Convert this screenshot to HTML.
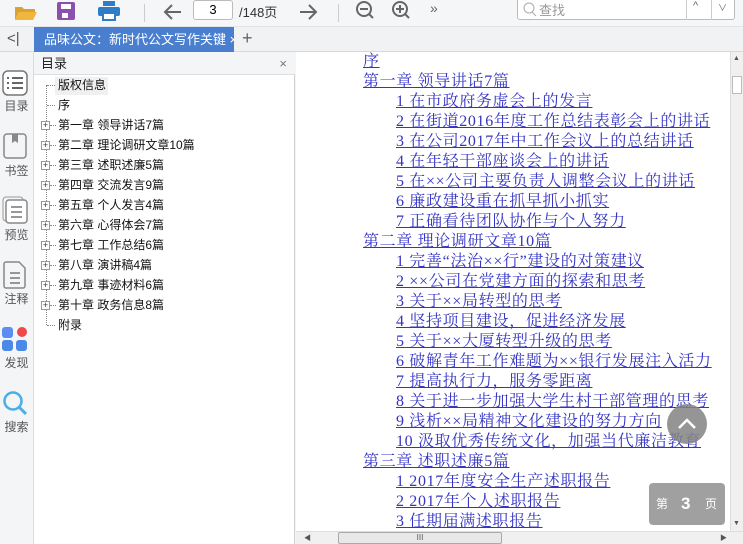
<!DOCTYPE html>
<html><head><meta charset="utf-8"><style>
*{margin:0;padding:0;box-sizing:border-box}
body{width:743px;height:544px;overflow:hidden;background:#f4f5f7;font-family:"Liberation Sans","Noto Sans CJK SC",sans-serif;position:relative}
.abs{position:absolute}
#tb{left:0;top:0;width:743px;height:27px;background:#f4f6f8;border-bottom:1px solid #e2e4e6}
#tabs{left:0;top:27px;width:743px;height:25px;background:#f1f2f4;border-bottom:1px solid #d8d8d8}
#tab{left:34px;top:27px;width:200px;height:25px;background:#4a7fd0;color:#fff;font-size:13px;line-height:25px;padding-left:10px;white-space:nowrap;overflow:hidden}
#side{left:0;top:52px;width:34px;height:492px;background:#f4f5f7;border-right:1px solid #dcdcdc}
.si{position:absolute;left:0;width:33px;text-align:center;font-size:12px;color:#555}
#toc{left:34px;top:52px;width:261px;height:492px;background:#fff;border-right:1px solid #d0d0d0}
#toch{left:34px;top:52px;width:261px;height:23px;background:#f4f5f7;border-bottom:1px solid #ddd;font-size:13px;line-height:23px;padding-left:7px;color:#222}
.t{position:absolute;left:58px;font-size:12px;color:#111;line-height:16px}
.pl{position:absolute;left:41px;width:9px;height:9px;border:1px solid #8a9ab0;background:#fff;font-size:9px;line-height:7px;text-align:center;color:#334}
.dl{position:absolute;border-top:1px dotted #888;width:8px}
#doc{left:296px;top:52px;width:434px;height:479px;background:#fff}
.d{position:absolute;font-family:"Liberation Serif","Noto Serif CJK SC",serif;font-size:16px;line-height:20px;letter-spacing:0.65px;color:#3535c4;text-decoration:underline;white-space:nowrap;margin-top:2px}
</style></head><body>
<div id="tb" class="abs"></div>
<svg class="abs" style="left:14px;top:2px" width="24" height="20"><path d="M1 5h7l2 2h11v3H5L1 18z" fill="#d9a235"/><path d="M5 10h18l-4 8H1z" fill="#f0b73c"/></svg>
<svg class="abs" style="left:57px;top:2px" width="18" height="18"><rect x="0" y="0" width="18" height="18" rx="2" fill="#8b4fae"/><rect x="4" y="2" width="10" height="5" fill="#fff"/><rect x="5" y="11" width="6" height="5" fill="#fff"/></svg>
<svg class="abs" style="left:98px;top:1px" width="22" height="20"><rect x="5" y="0" width="12" height="5" fill="#2e7dc6"/><rect x="0" y="6" width="22" height="9" rx="2" fill="#2e7dc6"/><rect x="5" y="12" width="12" height="7" fill="#fff" stroke="#2e7dc6" stroke-width="2"/></svg>
<div class="abs" style="left:144px;top:4px;width:1px;height:18px;background:#ccc"></div>
<svg class="abs" style="left:163px;top:3px" width="20" height="18"><path d="M18 9H3M9 2L2 9l7 7" stroke="#666" stroke-width="2" fill="none"/></svg>
<div class="abs" style="left:193px;top:0;width:40px;height:20px;border:1px solid #bbb;border-radius:3px;background:#fff;font-size:13px;text-align:center;line-height:18px">3</div>
<div class="abs" style="left:239px;top:2px;font-size:13px;color:#333">/148页</div>
<svg class="abs" style="left:298px;top:3px" width="20" height="18"><path d="M2 9h15M11 2l7 7-7 7" stroke="#666" stroke-width="2" fill="none"/></svg>
<div class="abs" style="left:338px;top:4px;width:1px;height:18px;background:#ccc"></div>
<svg class="abs" style="left:355px;top:0" width="20" height="20"><circle cx="9" cy="9" r="7" stroke="#666" stroke-width="2" fill="none"/><path d="M5 9h8M14 14l4 4" stroke="#666" stroke-width="2"/></svg>
<svg class="abs" style="left:391px;top:0" width="20" height="20"><circle cx="9" cy="9" r="7" stroke="#666" stroke-width="2" fill="none"/><path d="M5 9h8M9 5v8M14 14l4 4" stroke="#666" stroke-width="2"/></svg>
<div class="abs" style="left:430px;top:0;font-size:14px;color:#666">»</div>
<div class="abs" style="left:517px;top:-2px;width:218px;height:22px;border:1px solid #bbb;border-radius:3px;background:#fff"></div>
<svg class="abs" style="left:523px;top:1px" width="14" height="16"><circle cx="6" cy="7" r="5" stroke="#aaa" fill="none"/><path d="M9 11l4 4" stroke="#aaa"/></svg>
<div class="abs" style="left:539px;top:0px;font-size:13px;color:#999">查找</div>
<div class="abs" style="left:686px;top:-2px;width:1px;height:22px;background:#ccc"></div>
<div class="abs" style="left:711px;top:-2px;width:1px;height:22px;background:#ccc"></div>
<div class="abs" style="left:693px;top:0;font-size:11px;color:#666">^</div>
<div class="abs" style="left:718px;top:1px;font-size:9px;color:#666">∨</div>
<div id="tabs" class="abs"></div>
<div class="abs" style="left:7px;top:30px;font-size:15px;color:#555">&lt;|</div>
<div id="tab" class="abs">品味公文：新时代公文写作关键 ×</div>
<div class="abs" style="left:242px;top:28px;font-size:18px;color:#666">+</div>
<div id="side" class="abs"></div>
<svg class="abs" style="left:2px;top:70px" width="26" height="26"><rect x="1" y="1" width="24" height="24" rx="5" stroke="#777" stroke-width="1.5" fill="#fff"/><path d="M5 8h2M10 8h11M5 13h2M10 13h11M5 18h2M10 18h11" stroke="#666" stroke-width="2"/></svg>
<div class="si" style="top:97px">目录</div>
<svg class="abs" style="left:3px;top:133px" width="24" height="26"><rect x="1" y="1" width="22" height="24" rx="3" stroke="#888" fill="none" stroke-width="1.5"/><path d="M9 1v9l3-2 3 2V1" fill="#888"/></svg>
<div class="si" style="top:162px">书签</div>
<svg class="abs" style="left:2px;top:196px" width="26" height="28"><rect x="1" y="1" width="20" height="24" rx="3" stroke="#999" fill="none"/><rect x="4" y="4" width="21" height="23" rx="3" stroke="#888" fill="#fff" stroke-width="1.5"/><path d="M9 11h11M9 16h11M9 21h11" stroke="#777" stroke-width="1.5"/></svg>
<div class="si" style="top:226px">预览</div>
<svg class="abs" style="left:3px;top:261px" width="24" height="28"><path d="M1 3a2 2 0 0 1 2-2h13l6 6v18a2 2 0 0 1-2 2H3a2 2 0 0 1-2-2z" stroke="#888" fill="none" stroke-width="1.5"/><path d="M7 12h10M7 17h10M7 22h10" stroke="#777" stroke-width="1.5"/></svg>
<div class="si" style="top:290px">注释</div>
<svg class="abs" style="left:2px;top:326px" width="26" height="26"><rect x="0" y="1" width="11" height="11" rx="3" fill="#5b8ef0"/><circle cx="20" cy="6" r="5" fill="#f04848"/><rect x="0" y="14" width="11" height="11" rx="3" fill="#4a8ae6"/><rect x="14" y="14" width="11" height="11" rx="3" fill="#4a8ae6"/></svg>
<div class="si" style="top:354px">发现</div>
<svg class="abs" style="left:2px;top:390px" width="26" height="26"><circle cx="11" cy="11" r="8.5" stroke="#4aaee8" stroke-width="2.5" fill="none"/><path d="M17 17l7 7" stroke="#4aaee8" stroke-width="3"/></svg>
<div class="si" style="top:418px">搜索</div>
<div id="toc" class="abs"></div>
<div id="toch" class="abs">目录<span style="position:absolute;right:8px;color:#777">×</span></div>
<div class="abs" style="left:55px;top:77px;width:53px;height:18px;background:#f0f0f0"></div>
<div class="abs" style="left:46px;top:85px;height:240px;border-left:1px dotted #888"></div>
<div class="dl" style="left:47px;top:85px"></div><div class="t" style="top:77px">版权信息</div>
<div class="dl" style="left:47px;top:105px"></div><div class="t" style="top:97px">序</div>
<div class="pl" style="top:121px">+</div><div class="dl" style="left:50px;top:125px;width:6px"></div><div class="t" style="top:117px">第一章 领导讲话7篇</div>
<div class="pl" style="top:141px">+</div><div class="dl" style="left:50px;top:145px;width:6px"></div><div class="t" style="top:137px">第二章 理论调研文章10篇</div>
<div class="pl" style="top:161px">+</div><div class="dl" style="left:50px;top:165px;width:6px"></div><div class="t" style="top:157px">第三章 述职述廉5篇</div>
<div class="pl" style="top:181px">+</div><div class="dl" style="left:50px;top:185px;width:6px"></div><div class="t" style="top:177px">第四章 交流发言9篇</div>
<div class="pl" style="top:201px">+</div><div class="dl" style="left:50px;top:205px;width:6px"></div><div class="t" style="top:197px">第五章 个人发言4篇</div>
<div class="pl" style="top:221px">+</div><div class="dl" style="left:50px;top:225px;width:6px"></div><div class="t" style="top:217px">第六章 心得体会7篇</div>
<div class="pl" style="top:241px">+</div><div class="dl" style="left:50px;top:245px;width:6px"></div><div class="t" style="top:237px">第七章 工作总结6篇</div>
<div class="pl" style="top:261px">+</div><div class="dl" style="left:50px;top:265px;width:6px"></div><div class="t" style="top:257px">第八章 演讲稿4篇</div>
<div class="pl" style="top:281px">+</div><div class="dl" style="left:50px;top:285px;width:6px"></div><div class="t" style="top:277px">第九章 事迹材料6篇</div>
<div class="pl" style="top:301px">+</div><div class="dl" style="left:50px;top:305px;width:6px"></div><div class="t" style="top:297px">第十章 政务信息8篇</div>
<div class="dl" style="left:47px;top:325px"></div><div class="t" style="top:317px">附录</div>
<div id="doc" class="abs"></div>
<div class="d" style="left:363px;top:50px">序</div>
<div class="d" style="left:363px;top:70px">第一章 领导讲话7篇</div>
<div class="d" style="left:396px;top:90px">1 在市政府务虚会上的发言</div>
<div class="d" style="left:396px;top:110px">2 在街道2016年度工作总结表彰会上的讲话</div>
<div class="d" style="left:396px;top:130px">3 在公司2017年中工作会议上的总结讲话</div>
<div class="d" style="left:396px;top:150px">4 在年轻干部座谈会上的讲话</div>
<div class="d" style="left:396px;top:170px">5 在××公司主要负责人调整会议上的讲话</div>
<div class="d" style="left:396px;top:190px">6 廉政建设重在抓早抓小抓实</div>
<div class="d" style="left:396px;top:210px">7 正确看待团队协作与个人努力</div>
<div class="d" style="left:363px;top:230px">第二章 理论调研文章10篇</div>
<div class="d" style="left:396px;top:250px">1 完善“法治××行”建设的对策建议</div>
<div class="d" style="left:396px;top:270px">2 ××公司在党建方面的探索和思考</div>
<div class="d" style="left:396px;top:290px">3 关于××局转型的思考</div>
<div class="d" style="left:396px;top:310px">4 坚持项目建设，促进经济发展</div>
<div class="d" style="left:396px;top:330px">5 关于××大厦转型升级的思考</div>
<div class="d" style="left:396px;top:350px">6 破解青年工作难题为××银行发展注入活力</div>
<div class="d" style="left:396px;top:370px">7 提高执行力，服务零距离</div>
<div class="d" style="left:396px;top:390px">8 关于进一步加强大学生村干部管理的思考</div>
<div class="d" style="left:396px;top:410px">9 浅析××局精神文化建设的努力方向</div>
<div class="d" style="left:396px;top:430px">10 汲取优秀传统文化，加强当代廉洁教育</div>
<div class="d" style="left:363px;top:450px">第三章 述职述廉5篇</div>
<div class="d" style="left:396px;top:470px">1 2017年度安全生产述职报告</div>
<div class="d" style="left:396px;top:490px">2 2017年个人述职报告</div>
<div class="d" style="left:396px;top:510px">3 任期届满述职报告</div>
<div class="abs" style="left:667px;top:404px;width:40px;height:40px;border-radius:50%;background:rgba(130,130,130,0.85)"></div>
<svg class="abs" style="left:675px;top:412px" width="24" height="24"><path d="M4 16l8-8 8 8" stroke="#fff" stroke-width="2.5" fill="none"/></svg>
<div class="abs" style="left:649px;top:483px;width:76px;height:42px;border-radius:4px;background:rgba(150,150,150,0.9);color:#fff;font-size:12px;line-height:42px"><span style="position:absolute;left:7px">第</span><span style="position:absolute;left:32px;font-size:17px;font-weight:bold">3</span><span style="position:absolute;left:56px">页</span></div>
<div class="abs" style="left:730px;top:52px;width:13px;height:479px;background:#f0f0f0;border-left:1px solid #ddd"></div>
<div class="abs" style="left:732px;top:76px;width:10px;height:18px;background:#fff;border:1px solid #bbb"></div>
<div class="abs" style="left:733px;top:55px;font-size:7px;color:#555">▲</div>
<div class="abs" style="left:733px;top:520px;font-size:7px;color:#555">▼</div>
<div class="abs" style="left:296px;top:531px;width:447px;height:13px;background:#f0f0f0;border-top:1px solid #ddd"></div>
<div class="abs" style="left:338px;top:532px;width:164px;height:12px;background:#e8e8e8;border:1px solid #aaa;border-radius:2px;font-size:8px;text-align:center;line-height:10px;color:#555">III</div>
<div class="abs" style="left:304px;top:533px;font-size:7px;color:#555">◀</div>
<div class="abs" style="left:720px;top:533px;font-size:7px;color:#555">▶</div>
</body></html>
